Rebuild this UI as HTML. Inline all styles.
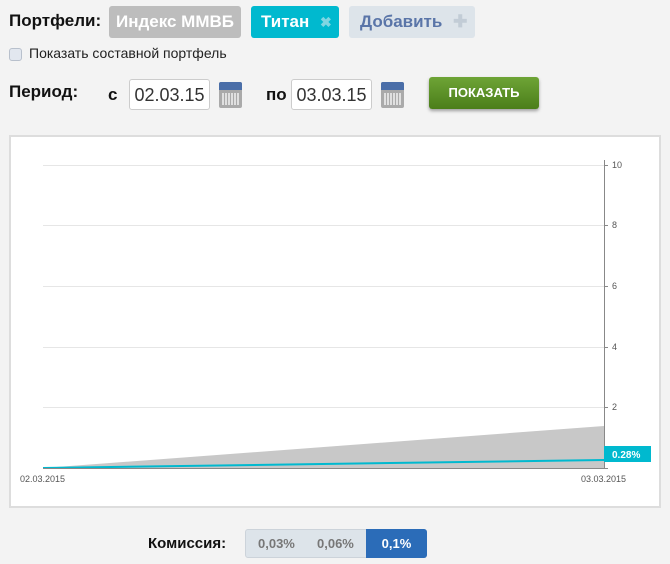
<!DOCTYPE html>
<html><head><meta charset="utf-8"><style>
body{margin:0;width:670px;height:564px;background:#f3f3f3;font-family:"Liberation Sans",sans-serif;position:relative;overflow:hidden}
.a{position:absolute}
.tag{position:absolute;top:6px;height:32px;line-height:31px;border-radius:3px;font-weight:bold;font-size:17px;color:#fff}
.inp{position:absolute;top:79px;width:81px;height:31px;background:#fff;border:1px solid #ccc;border-radius:3px;font-size:18px;color:#333;line-height:30px;text-align:center;box-sizing:border-box}
.cal{position:absolute;top:82px;width:23px;height:26px;border-radius:2px;background:#aaa}
.cal:before{content:"";position:absolute;left:0;right:0;top:0;height:8px;background:#4a6ea8;border-radius:2px 2px 0 0}
.cal:after{content:"";position:absolute;left:3px;right:3px;top:11px;bottom:3px;background:repeating-linear-gradient(90deg,#eee 0 2px,#aaa 2px 3px),#eee;opacity:.8}
</style></head><body>
<div class="a" style="left:9px;top:11px;font-size:17px;font-weight:bold;color:#111">Портфели:</div>
<div class="tag" style="left:109px;width:132px;background:#bdbdbd;text-align:center">Индекс ММВБ</div>
<div class="tag" style="left:251px;width:88px;background:#00b9cf;padding-left:10px;box-sizing:border-box">Титан <span style="color:#7fd6e2;margin-left:6px;font-size:14px">✖</span></div>
<div class="tag" style="left:349px;width:126px;background:#dde4ea;color:#5a75a8;padding-left:11px;box-sizing:border-box">Добавить <span style="color:#c2ccd6;margin-left:6px">✚</span></div>
<div class="a" style="left:9px;top:48px;width:11px;height:11px;border:1px solid #b8c0cc;border-radius:3px;background:#e2e7ef"></div>
<div class="a" style="left:29px;top:45px;font-size:14px;color:#222">Показать составной портфель</div>
<div class="a" style="left:9px;top:82px;font-size:17px;font-weight:bold;color:#111">Период:</div>
<div class="a" style="left:108px;top:85px;font-size:17px;font-weight:bold;color:#111">с</div>
<div class="inp" style="left:129px">02.03.15</div>
<div class="cal" style="left:219px"></div>
<div class="a" style="left:266px;top:85px;font-size:17px;font-weight:bold;color:#111">по</div>
<div class="inp" style="left:291px">03.03.15</div>
<div class="cal" style="left:381px"></div>
<div class="a" style="left:429px;top:77px;width:110px;height:32px;border-radius:3px;background:linear-gradient(#6ea436,#4b7e1a);box-shadow:0 2px 3px rgba(0,0,0,.35);color:#fff;font-weight:bold;font-size:13px;text-align:center;line-height:32px">ПОКАЗАТЬ</div>
<div class="a" style="left:9px;top:135px;width:648px;height:369px;background:#fff;border:2px solid #ddd"></div>
<svg class="a" style="left:0;top:0" width="670" height="564">
<g stroke="#e6e6e6" stroke-width="1">
<line x1="43" x2="604" y1="165.5" y2="165.5"/><line x1="43" x2="604" y1="225.5" y2="225.5"/><line x1="43" x2="604" y1="286.5" y2="286.5"/><line x1="43" x2="604" y1="347.5" y2="347.5"/><line x1="43" x2="604" y1="407.5" y2="407.5"/></g>
<polygon points="43,468 604,426 604,468" fill="#c8c8c8"/>
<line x1="43" y1="468" x2="604" y2="460" stroke="#00b9cf" stroke-width="2"/>
<line x1="43" y1="468.5" x2="604" y2="468.5" stroke="#888"/>
<line x1="604.5" y1="160" x2="604.5" y2="469" stroke="#888"/>
<g stroke="#888"><line x1="604" x2="608" y1="165.5" y2="165.5"/><line x1="604" x2="608" y1="225.5" y2="225.5"/><line x1="604" x2="608" y1="286.5" y2="286.5"/><line x1="604" x2="608" y1="347.5" y2="347.5"/><line x1="604" x2="608" y1="407.5" y2="407.5"/><line x1="604" x2="608" y1="468.5" y2="468.5"/></g>
<g font-size="9" fill="#555" font-family="Liberation Sans"><text x="612" y="168">10</text><text x="612" y="228">8</text><text x="612" y="289">6</text><text x="612" y="350">4</text><text x="612" y="410">2</text>
<text x="20" y="482">02.03.2015</text><text x="581" y="482">03.03.2015</text></g>
<rect x="604" y="446" width="47" height="16" fill="#00b9cf"/>
<text x="612" y="458" font-size="10" font-weight="bold" fill="#fff" font-family="Liberation Sans">0.28%</text>
</svg>
<div class="a" style="left:148px;top:535px;font-size:15px;font-weight:bold;color:#111">Комиссия:</div>
<div class="a" style="left:245px;top:529px;width:182px;height:29px;border-radius:3px;background:#dde4ea;border:1px solid #ccd3da;box-sizing:border-box;font-size:13px;font-weight:bold;color:#777;line-height:27px">
<span class="a" style="left:12px">0,03%</span><span class="a" style="left:71px">0,06%</span>
<span class="a" style="left:120px;top:-1px;width:61px;height:29px;background:#2b6cb8;border-radius:0 3px 3px 0;color:#fff;text-align:center;line-height:29px">0,1%</span></div>
</body></html>
